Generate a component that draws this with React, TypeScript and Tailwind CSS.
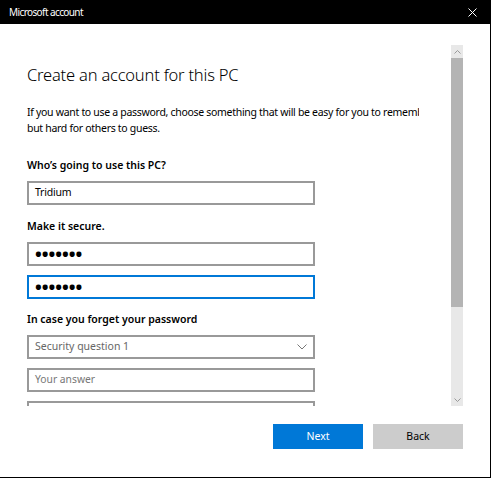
import React from "react";

const font = { fontFamily: '"Segoe UI", "Noto Sans", "Open Sans", sans-serif' };

function Field({ children, active }: { children?: React.ReactNode; active?: boolean }) {
  return (
    <div
      className={`flex h-[24px] w-[288px] items-center border-2 px-[6px] ${
        active ? "border-[#0078d7]" : "border-[#999999]"
      }`}
    >
      {children}
    </div>
  );
}

function Dots() {
  return <span className="text-[18px] font-bold leading-none text-black">•••••••</span>;
}

export default function App() {
  return (
    <div className="flex h-[478px] w-[491px] flex-col overflow-hidden border-r border-b border-black bg-white" style={font}>
      {/* title bar */}
      <div className="flex h-[24px] shrink-0 items-center justify-between bg-black pl-[9px] pr-[13px] pt-[1px] text-[10px] tracking-[-0.6px] text-white">
        <span>Microsoft account</span>
        <svg width="9" height="9" viewBox="0 0 9 9" stroke="white" strokeWidth="1">
          <path d="M0.5 0.5 L8.5 8.5 M8.5 0.5 L0.5 8.5" />
        </svg>
      </div>

      {/* scrolling body */}
      <div className="mt-[21px] flex h-[361px] shrink-0">
        <div className="w-[419px] shrink-0 overflow-hidden pl-[27px]">
          <div className="w-[420px]">
            <h1 className="pt-[16px] text-[16.5px] font-light leading-[28px] tracking-[-0.2px] text-black">
              Create an account for this PC
            </h1>
            <p className="mt-[15px] whitespace-nowrap text-[10.5px] leading-[16px] tracking-[-0.3px] text-black">
              If you want to use a password, choose something that will be easy for you to remember
              <br />
              but hard for others to guess.
            </p>

            <div className="mt-[21px] text-[10.5px] font-semibold leading-[16px] text-black">Who’s going to use this PC?</div>
            <div className="mt-[8px]">
              <Field>
                <span className="text-[10.5px] tracking-[-0.2px] text-black">Tridium</span>
              </Field>
            </div>

            <div className="mt-[13px] text-[10.5px] font-semibold leading-[16px] text-black">Make it secure.</div>
            <div className="mt-[8px] flex flex-col gap-[9px]">
              <Field>
                <Dots />
              </Field>
              <Field active>
                <Dots />
              </Field>
            </div>

            <div className="mt-[12px] text-[10.5px] font-semibold leading-[16px] text-black">In case you forget your password</div>
            <div className="mt-[8px] flex flex-col gap-[9px]">
              <Field>
                <div className="flex w-full items-center justify-between">
                  <span className="text-[10.5px] text-[#666666]">Security question 1</span>
                  <svg width="10" height="6" viewBox="0 0 10 6" fill="none" stroke="#777777" strokeWidth="1">
                    <path d="M0.5 0.5 L5 5 L9.5 0.5" />
                  </svg>
                </div>
              </Field>
              <Field>
                <span className="text-[10.3px] text-[#777777]">Your answer</span>
              </Field>
              <Field />
            </div>
          </div>
        </div>

        {/* scrollbar */}
        <div className="ml-[32px] flex w-[12px] shrink-0 flex-col bg-[#e8e8e8]">
          <div className="flex h-[13px] items-center justify-center">
            <svg width="7" height="4" viewBox="0 0 7 4" fill="none" stroke="#999999" strokeWidth="1">
              <path d="M0.5 3.5 L3.5 0.5 L6.5 3.5" />
            </svg>
          </div>
          <div className="h-[249px] bg-[#b4b4b4]" />
          <div className="flex-1" />
          <div className="flex h-[13px] items-center justify-center">
            <svg width="7" height="4" viewBox="0 0 7 4" fill="none" stroke="#999999" strokeWidth="1">
              <path d="M0.5 0.5 L3.5 3.5 L6.5 0.5" />
            </svg>
          </div>
        </div>
      </div>

      {/* footer */}
      <div className="flex flex-1 items-start justify-end gap-[10px] pr-[27px] pt-[18px]">
        <button className="h-[25px] w-[90px] bg-[#0078d7] text-[10.5px] text-white">Next</button>
        <button className="h-[25px] w-[90px] bg-[#cccccc] text-[10.5px] text-black">Back</button>
      </div>
    </div>
  );
}
